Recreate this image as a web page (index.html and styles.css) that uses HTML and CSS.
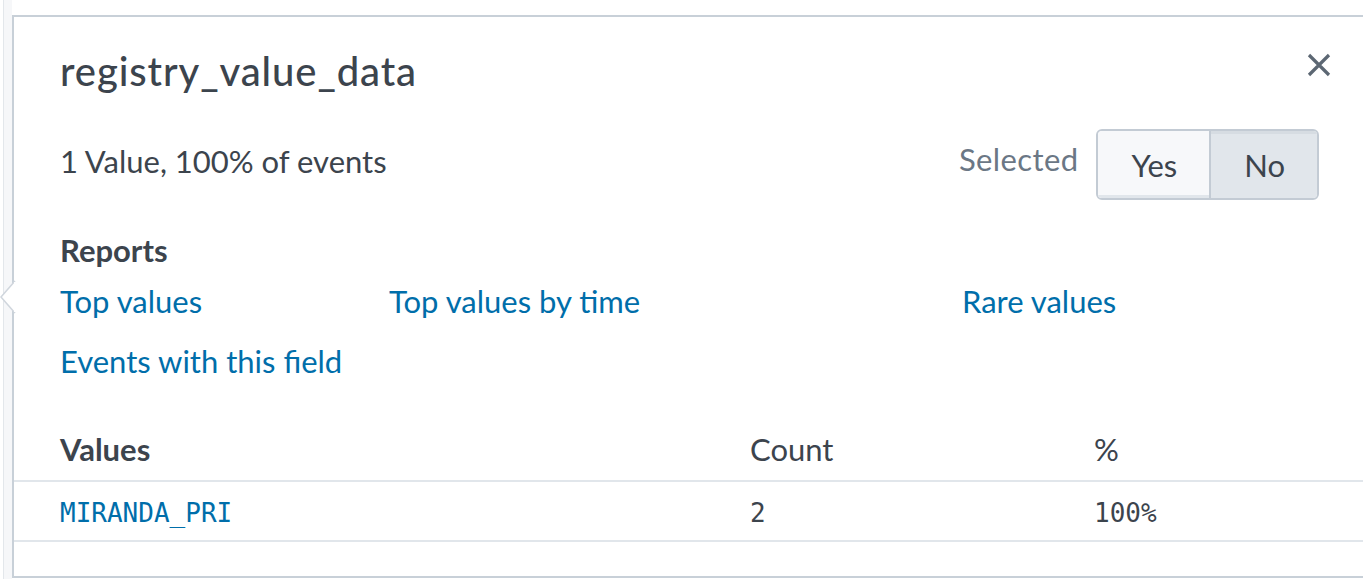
FILE: index.html
```html
<!DOCTYPE html>
<html>
<head>
<meta charset="utf-8">
<link rel="stylesheet" href="styles.css">
</head>
<body>
<div class="page">
  <div class="rail"></div>
  <div class="popover">
    <svg class="arrow" width="16" height="34" viewBox="0 0 16 34"><path d="M15 1 L1 17 L15 33" fill="#fff" stroke="#d0d6dd" stroke-width="1.5"/><rect x="14" y="2" width="3" height="30" fill="#fff"/></svg>
    <div class="head">
      <h1 class="title">registry_value_data</h1>
      <button class="close" aria-label="Close"><svg width="24" height="24" viewBox="0 0 24 24"><path d="M2 2 L22 22 M22 2 L2 22" stroke="#5c6773" stroke-width="3.2" stroke-linecap="butt"/></svg></button>
    </div>
    <div class="summary">
      <div class="count-text">1 Value, 100% of events</div>
      <div class="selected">
        <span class="sel-label">Selected</span>
        <div class="toggle">
          <button class="opt">Yes</button>
          <button class="opt active">No</button>
        </div>
      </div>
    </div>
    <h2 class="reports">Reports</h2>
    <div class="links">
      <a class="link">Top values</a>
      <a class="link">Top values by time</a>
      <a class="link">Rare values</a>
      <a class="link">Events with this field</a>
    </div>
    <table class="values">
      <thead>
        <tr><th class="c1">Values</th><th class="c2">Count</th><th class="c3">%</th></tr>
      </thead>
      <tbody>
        <tr><td class="c1 mono link-c">MIRANDA_PRI</td><td class="c2 mono">2</td><td class="c3 mono">100%</td></tr>
      </tbody>
    </table>
  </div>
</div>
</body>
</html>
```
FILE: styles.css
```css
html, body {
  margin: 0;
  padding: 0;
  background: #fff;
  overflow: hidden;
}
body {
  font-family: Lato, "Open Sans", sans-serif;
  color: #3c444d;
}
.page {
  display: flex;
  height: 579px;
  padding-left: 3px;
}
.rail {
  width: 8px;
  border-left: 1px solid #e3e7eb;
  background: #f6f7f9;
  flex: none;
}
.popover {
  position: relative;
  flex: 1;
  margin-top: 15px;
  height: 563px;
  border: 2px solid #c8d0d8;
  border-right: none;
  background: #fff;
  box-sizing: border-box;
  padding: 0 44px 0 46px;
}
.arrow {
  position: absolute;
  left: -14px;
  top: 263px;
}
.head {
  display: flex;
  justify-content: space-between;
  align-items: flex-start;
  padding-top: 32px;
}
.title {
  margin: 0;
  font-size: 40px;
  line-height: 44px;
  font-weight: 500;
  letter-spacing: 0.9px;
  color: #3c444d;
}
.close {
  border: 0;
  background: none;
  padding: 0;
  margin: 4px -12px 0 0;
  width: 24px;
  height: 24px;
  display: flex;
}
.summary {
  display: flex;
  justify-content: space-between;
  align-items: center;
  margin-top: 36px;
}
.count-text {
  font-size: 31px;
  line-height: 36px;
  margin-top: -8px;
}
.selected {
  display: flex;
  align-items: center;
  gap: 18px;
}
.sel-label {
  font-size: 31px;
  letter-spacing: 0.4px;
  color: #6b7785;
  margin-top: -12px;
}
.toggle {
  display: flex;
  border: 2px solid #c3cbd4;
  border-radius: 6px;
  overflow: hidden;
  height: 71px;
  box-sizing: border-box;
}
.opt {
  font-family: inherit;
  font-size: 31px;
  color: #3c444d;
  background: #f7f8fa;
  border: 0;
  padding: 0 32px 0 33px;
  box-shadow: inset 0 -3px 0 #e1e6eb;
}
.opt + .opt {
  border-left: 2px solid #c3cbd4;
}
.opt.active {
  background: #e1e6eb;
  box-shadow: inset 0 3px 0 #d6dce2;
}
.reports {
  margin: 32px 0 0;
  font-size: 31px;
  line-height: 36px;
  font-weight: 700;
}
.links {
  display: grid;
  grid-template-columns: 329px 573px auto;
  row-gap: 24px;
  margin-top: 15px;
}
.link {
  font-size: 31px;
  line-height: 36px;
  color: #006eaa;
  white-space: nowrap;
}
.values {
  border-collapse: collapse;
  margin: 52px -44px 0 -46px;
  width: calc(100% + 90px);
}
.values th, .values td {
  text-align: left;
  padding: 0;
  font-size: 31px;
}
.values th {
  font-weight: 400;
  line-height: 36px;
  padding-bottom: 13px;
  border-bottom: 2px solid #e1e6eb;
}
.values th.c1 {
  font-weight: 700;
}
.values td {
  height: 55px;
  padding-top: 3px;
  border-bottom: 2px solid #e1e6eb;
}
.c1 {
  padding-left: 46px !important;
  width: 690px;
}
.c2 {
  width: 344px;
}
.values .mono {
  font-family: "DejaVu Sans Mono", monospace;
  font-size: 26px;
}
.link-c {
  color: #006eaa;
}
```
